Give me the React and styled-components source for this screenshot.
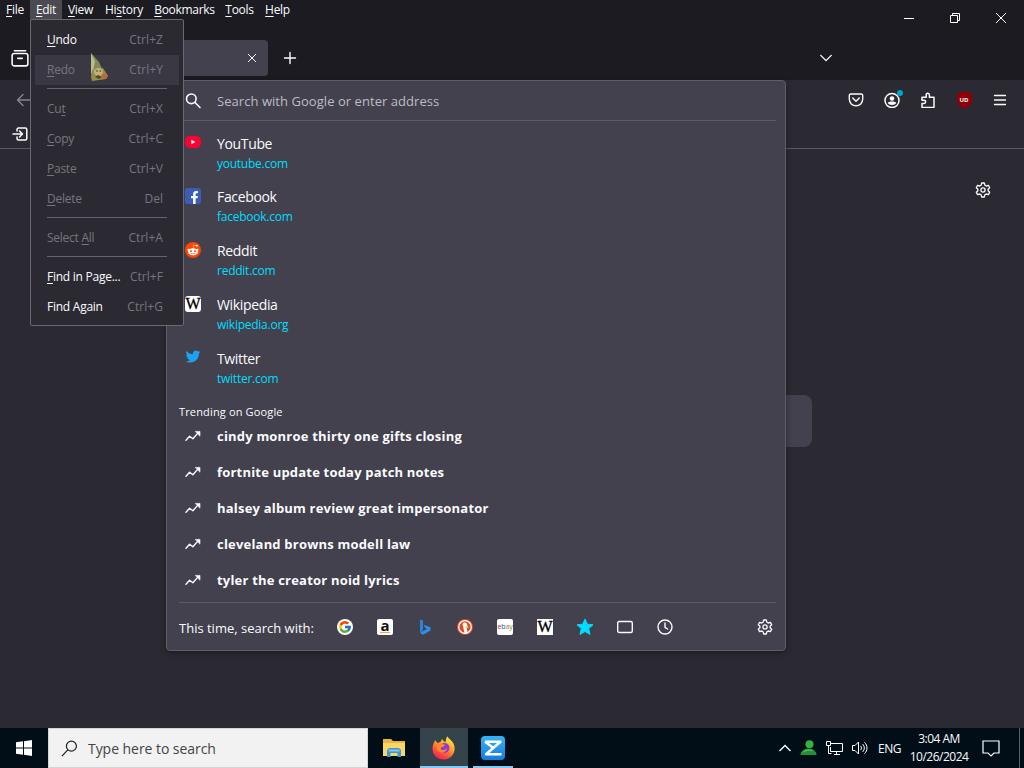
import React from 'react';
import styled, { createGlobalStyle } from 'styled-components';
import { FaTwitter, FaRedditAlien, FaFacebookF } from 'react-icons/fa';
import { FcGoogle } from 'react-icons/fc';

const menus = [
  ['', 'F', 'ile'],
  ['', 'E', 'dit'],
  ['', 'V', 'iew'],
  ['Hi', 's', 'tory'],
  ['', 'B', 'ookmarks'],
  ['', 'T', 'ools'],
  ['', 'H', 'elp'],
];

const editMenu = [
  { label: ['', 'U', 'ndo'], keys: 'Ctrl+Z', on: true },
  { label: ['', 'R', 'edo'], keys: 'Ctrl+Y', hover: true },
  null,
  { label: ['Cu', 't', ''], keys: 'Ctrl+X' },
  { label: ['', 'C', 'opy'], keys: 'Ctrl+C' },
  { label: ['', 'P', 'aste'], keys: 'Ctrl+V' },
  { label: ['', 'D', 'elete'], keys: 'Del' },
  null,
  { label: ['Select ', 'A', 'll'], keys: 'Ctrl+A' },
  null,
  { label: ['', 'F', 'ind in Page...'], keys: 'Ctrl+F', on: true },
  { label: ['Find A', '', 'gain'], keys: 'Ctrl+G', on: true },
];

const trending = [
  'cindy monroe thirty one gifts closing',
  'fortnite update today patch notes',
  'halsey album review great impersonator',
  'cleveland browns modell law',
  'tyler the creator noid lyrics',
];

const Key = ({ parts }) => (
  <span>{parts[0]}{parts[1] && <u>{parts[1]}</u>}{parts[2]}</span>
);

// Icons

const Line = ({ size = 16, w = 1.4, children, ...rest }) => (
  <svg width={size} height={size} viewBox="0 0 16 16" fill="none" stroke="currentColor" strokeWidth={w} strokeLinecap="round" strokeLinejoin="round" {...rest}>{children}</svg>
);

const Gear = () => (
  <Line w={1.3}>
    <path d="M6.700 1h2.600l.6 2.200 1.300.8 2.200-.6 1.300 2.300L13.100 7.200v1.600l1.600 1.500-1.300 2.300-2.200-.6-1.300.8-.6 2.200H6.700l-.6-2.200-1.300-.8-2.200.6-1.300-2.300 1.600-1.500V7.200L1.300 5.700l1.300-2.300 2.200.6 1.300-.8z" />
    <circle cx="8" cy="8" r="2.100" />
  </Line>
);
const Glass = () => <Line w={1.6}><circle cx="6.300" cy="5.800" r="4.800" /><path d="M10 9.500l5 5" /></Line>;
const Trend = () => (
  <Line w={1.4}>
    <path d="M1 12.300l3.600-4.100 3.300 2.500L13.500 4.400" />
    <path d="M10.500 3.400h4.500v4.500z" fill="currentColor" strokeWidth=".6" />
  </Line>
);
const YouTube = () => (
  <svg width="16" height="16" viewBox="0 0 16 16"><rect y="2" width="16" height="12" rx="5" fill="#ff0033" /><path d="M6.400 5.800v4.400l4-2.200z" fill="#fff" /></svg>
);
const Bing = () => (
  <svg width="16" height="16" viewBox="0 0 16 16"><path d="M3 .5l3 1v9.500l-3 3z" fill="#2a83dc" /><path d="M3 14l3 1.700 7.500-4.300V8.200L6.700 5.700l1.500 3.400 1.900.9L6 12z" fill="#2f8fe8" /></svg>
);
const Duck = () => (
  <svg width="16" height="16" viewBox="0 0 16 16">
    <circle cx="8" cy="8" r="8" fill="#de4b28" /><circle cx="8" cy="8" r="6.300" fill="none" stroke="#fff" strokeWidth="1.300" />
    <path d="M5.500 5c1-2.200 4.500-1.800 4.800 1l.2 2.500-.8 1 1 4.300-3 .6z" fill="#fff" /><path d="M8.500 7.500h3v1.400h-3z" fill="#f5bd20" />
  </svg>
);
const Star = () => <svg width="18" height="18" viewBox="0 0 18 18"><path d="M9 1l2.300 5.200 5.700.6-4.300 3.800 1.300 5.800L9 13.500l-5 2.900 1.300-5.800L1 6.800l5.700-.6z" fill="#00ddff" stroke="#00ddff" strokeLinejoin="round" /></svg>;

const Gnome = () => (
  <svg width="22" height="30" viewBox="0 0 22 30">
    <path d="M2 0L10 9l4 9-12 3z" fill="#7e8a5c" /><path d="M2 0l4 8-2 11-2 2z" fill="#b7bd83" />
    <path d="M3 17l11-2 5 8-2 3-14 2-1-4z" fill="#948d4b" />
    <ellipse cx="9.500" cy="19" rx="4.500" ry="4" fill="#c4b178" />
    <path d="M14 20l5 3-2 3-4-1z" fill="#c4633b" />
    <path d="M6 24l3-2 4 2-3 2z" fill="#4f482a" />
    <circle cx="8" cy="18" r=".8" fill="#3c3624" /><circle cx="11.300" cy="18" r=".8" fill="#3c3624" />
  </svg>
);

const Explorer = () => (
  <svg width="22" height="20" viewBox="0 0 22 20">
    <path d="M0 1h8l2 2h12v15H0z" fill="#eab53c" /><path d="M0 5h22v13H0z" fill="#fbd667" />
    <path d="M4 19v-7l2-2h10l2 2v7h-3.500v-4h-7v4z" fill="#3e95d6" /><path d="M5.500 11.500h11v2h-11z" fill="#8bc4ea" />
  </svg>
);
const Firefox = () => (
  <svg width="24" height="24" viewBox="0 0 24 24">
    <defs>
      <linearGradient id="fx" x1=".8" y1="0" x2=".25" y2="1"><stop offset="0" stopColor="#fff044" /><stop offset=".4" stopColor="#ffa62b" /><stop offset=".75" stopColor="#ff4a3d" /><stop offset="1" stopColor="#f5156c" /></linearGradient>
    </defs>
    <path d="M3 4l2.500 3 3-1 1.500-3 2 2.500 1.500.5C14 3.500 14 2 15.500.3c1 2.700 4 3.500 6 7.200C25 15 20 23.500 12 23.500S-.8 17 .8 10C1 7.500 2.500 6.500 3 4z" fill="url(#fx)" />
    <circle cx="12.500" cy="12" r="5" fill="#8b3bdc" />
    <path d="M5 8c3-1.500 5.500 0 8 1-1 2.500-4 1.500-4.500 3.500 1 2.500 5 2 6.500-.5 0 5-8 6.500-10 1z" fill="#ff8a26" />
  </svg>
);
const Zed = () => (
  <svg width="24" height="24" viewBox="0 0 24 24">
    <defs><linearGradient id="zd" x1="0" y1="0" x2="0" y2="1"><stop offset="0" stopColor="#35b4f5" /><stop offset="1" stopColor="#167bdc" /></linearGradient></defs>
    <rect width="24" height="24" rx="4" fill="url(#zd)" />
    <path d="M4 5.800h15.500L5 18.200h15.500M4 5.800l8.500 6.200" fill="none" stroke="#fff" strokeWidth="2.500" strokeLinejoin="round" />
  </svg>
);

const App = () => {
  return (
    <>
      <Global />
      <Desktop>
        <TitleBar>
          <div>
            <MenuBar>
              {menus.map((m, i) => <MenuName key={m[1] + i} $open={i === 1}><Key parts={m} /></MenuName>)}
            </MenuBar>
            <TabStrip>
              <IconSlot $w={40}>
                <Line size={18}><path d="M3 1.500h10" /><rect x="1" y="4" width="14" height="11" rx="2" /><path d="M6 8.300h4" /></Line>
              </IconSlot>
              <Tab><Line size={10} w={1.600}><path d="M2 2l12 12M14 2L2 14" /></Line></Tab>
              <IconSlot $w={44}><Line size={16} w={1.400}><path d="M8 2.500v11M2.500 8h11" /></Line></IconSlot>
              <ListTabs><Line size={14} w={1.600}><path d="M2 5l6 6 6-6" /></Line></ListTabs>
            </TabStrip>
          </div>
          <WindowButtons>
            <svg width="10" height="10" stroke="#fff"><path d="M0 5.500h10" /></svg>
            <svg width="12" height="12" stroke="#fff" fill="none"><path d="M1.500 3.500h7v7h-7zM3.500 3.500v-2h7v7h-2" /></svg>
            <svg width="10" height="10" stroke="#fff"><path d="M0 0l10 10M10 0L0 10" /></svg>
          </WindowButtons>
        </TitleBar>

        <NavBar>
          <BackSlot><Line><path d="M15 8H1.500M7 2.500L1.500 8 7 13.500" /></Line></BackSlot>
          <NavIcons>
            <IconSlot $w={36}><Line><path d="M2.800 2h10.400c.9 0 1.500.6 1.500 1.500V7c0 4-3 6.800-6.700 6.800S1.300 11 1.300 7V3.500C1.300 2.600 1.900 2 2.800 2z" /><path d="M4.700 6L8 9.200 11.300 6" /></Line></IconSlot>
            <IconSlot $w={36}>
              <Line w={1.500}><circle cx="8" cy="8.500" r="7" /><circle cx="8" cy="6.500" r="2.300" fill="currentColor" stroke="none" /><path d="M3.800 11c0-2 8.400-2 8.400 0-1 2.500-7.400 2.500-8.400 0z" fill="currentColor" stroke="none" /></Line>
              <Dot />
            </IconSlot>
            <IconSlot $w={36}><Line w={1.500}><path d="M2 15.500v-4h2c2.200 0 2.200-3.300 0-3.300H2V5.200h4.200V3c0-2.400 3.200-2.400 3.200 0v2.200H14v10.300z" /></Line></IconSlot>
            <IconSlot $w={36}><Shield>UD</Shield></IconSlot>
            <IconSlot $w={36}><Line w={1.300}><path d="M2.500 3.500h11M2.500 8h11M2.500 12.500h11" /></Line></IconSlot>
          </NavIcons>
        </NavBar>
        <BookmarksBar>
          <IconSlot $w={40}><Line w={1.500}><path d="M5 5V3.500C5 2.700 5.700 2 6.500 2h6.800c.8 0 1.500.7 1.500 1.500v9c0 .8-.7 1.500-1.500 1.500H6.500c-.8 0-1.500-.7-1.500-1.500V11M1 8h9M7.500 5L10.500 8l-3 3" /></Line></IconSlot>
        </BookmarksBar>

        <NewTab>
          <Customize><Gear /></Customize>
          <SearchBox />
        </NewTab>

        <Taskbar>
          <Start>
            <svg width="16" height="16" viewBox="0 0 16 16" fill="#fff"><path d="M0 2.300L7 1.300v6.200H0zM8 1.200L16 0v7.500H8zM0 8.500h7v6.300l-7-1zM8 8.500h8V16l-8-1.200z" /></svg>
          </Start>
          <TaskSearch>
            <svg width="17" height="17" viewBox="0 0 18 18" fill="none" stroke="#222" strokeWidth="1.300"><circle cx="11" cy="6.500" r="5.300" /><path d="M7.200 10.500L1 17" /></svg>
            <span>Type here to search</span>
          </TaskSearch>
          <TaskApp $w={52}><Explorer /></TaskApp>
          <TaskApp $w={48} $active><Firefox /></TaskApp>
          <Running><Zed /></Running>
          <Tray>
            <svg width="12" height="8" fill="none" stroke="#fff" strokeWidth="1.300"><path d="M.5 7L6 1.500 11.500 7" /></svg>
            <svg width="17" height="16" viewBox="0 0 16 16"><circle cx="9" cy="4.300" r="4" fill="#39ae43" /><path d="M0 15c0-4 4-6.500 8-6.500s8 2.500 8 6.500z" fill="#1f9331" /><path d="M3 12c2-2 6-2.500 9-1.500" stroke="#6fd070" fill="none" /></svg>
            <svg width="17" height="15" fill="none" stroke="#fff"><path d="M5 2.500h11.500v8H4.500V6M8 13.500h6M10.500 10.500v3M.5.500h4v4h-4zM2.500 4.500v8h3" /></svg>
            <svg width="16" height="14" fill="none" stroke="#fff"><path d="M.5 4.500h2.500L6.500 1v12L3 9.500H.5zM8.500 4.800c1.200 1.300 1.200 3.100 0 4.400M10.500 3c2.400 2.300 2.400 5.700 0 8M12.500 1.300c3.300 3.300 3.300 8.100 0 11.400" /></svg>
            <Lang>ENG</Lang>
            <Clock><span>3:04 AM</span><span>10/26/2024</span></Clock>
            <Notice width="18" height="17" fill="none" stroke="#fff" strokeWidth="1.200"><path d="M1 1h16v12h-5l-3 3-3-3H1z" /></Notice>
          </Tray>
          <ShowDesktop />
        </Taskbar>

        <UrlPanel>
          <UrlInput><IconCol><Glass /></IconCol><span>Search with Google or enter address</span></UrlInput>
          <Sites>
            <Site><YouTube /><div><Name>YouTube</Name><Url>youtube.com</Url></div></Site>
            <Site><Badge $bg="#3b5db5" $shape="2px"><FacebookF size={13} /></Badge><div><Name>Facebook</Name><Url>facebook.com</Url></div></Site>
            <Site><Badge $bg="#ff4500" $shape="50%"><FaRedditAlien size={12} /></Badge><div><Name>Reddit</Name><Url>reddit.com</Url></div></Site>
            <Site><Badge $bg="#fff" $shape="3px"><BigW>W</BigW></Badge><div><Name>Wikipedia</Name><Url>wikipedia.org</Url></div></Site>
            <Site><FaTwitter size={15} color="#1da1f2" /><div><Name>Twitter</Name><Url>twitter.com</Url></div></Site>
          </Sites>
          <TrendTitle>Trending on Google</TrendTitle>
          {trending.map((t) => <TrendRow key={t}><IconCol><Trend /></IconCol><span>{t}</span></TrendRow>)}
          <Engines>
            <EngineLabel>This time, search with:</EngineLabel>
            <Engine><Badge $bg="#fff" $shape="50%"><FcGoogle size={14} /></Badge></Engine>
            <Engine><Badge $bg="#fff" $shape="2px"><Amazon>a</Amazon></Badge></Engine>
            <Engine><Bing /></Engine>
            <Engine><Duck /></Engine>
            <Engine><Badge $bg="#fff" $shape="2px"><Ebay><i>e</i><b>b</b><em>a</em><s>y</s></Ebay></Badge></Engine>
            <Engine><Badge $bg="#fff" $shape="0"><BigW>W</BigW></Badge></Engine>
            <Engine><Star /></Engine>
            <Engine><Line><rect x=".7" y="2.500" width="14.600" height="11" rx="1.500" /></Line></Engine>
            <Engine><Line><circle cx="8" cy="8" r="7" /><path d="M8 4v4.300l2.500 1.700" /></Line></Engine>
            <EngineGear><Gear /></EngineGear>
          </Engines>
        </UrlPanel>

        <EditMenu>
          {editMenu.map((item, i) =>
            item ? (
              <MenuItem key={i} $on={item.on} $hover={item.hover}>
                <Key parts={item.label} />
                <Shortcut>{item.keys}</Shortcut>
              </MenuItem>
            ) : <Separator key={i} />
          )}
        </EditMenu>
        <Pointer><Gnome /></Pointer>
      </Desktop>
    </>
  );
};

const Global = createGlobalStyle`
  * { box-sizing: border-box; }
  body {
    margin: 0;
    background: #2b2a33;
    overflow: hidden;
    font-family: "Open Sans", "Noto Sans", sans-serif;
    color: #fbfbfe;
  }
  svg { display: block; flex: none; }
  u { text-underline-offset: 2px; text-decoration-thickness: 1px; }
`;

const Desktop = styled.div`
  position: relative;
  display: flex;
  flex-direction: column;
  width: 1024px;
  height: 768px;
  overflow: hidden;
  background: #2b2a33;
`;

// Browser window

const TitleBar = styled.div`
  display: flex;
  height: 80px;
  background: #1c1b22;
  > div:first-child { flex: 1; }
`;
const MenuBar = styled.div`
  display: grid;
  grid-template-columns: 30px 32px 37px 50px 71px 39px 37px;
  height: 20px;
`;
const MenuName = styled.div`
  display: flex;
  justify-content: center;
  font-size: 12px;
  line-height: 20px;
  letter-spacing: -0.3px;
  white-space: nowrap;
  background: ${(p) => (p.$open ? '#4b4a50' : 'transparent')};
`;
const TabStrip = styled.div`
  display: flex;
  align-items: center;
  height: 60px;
  padding-top: 16px;
`;
const IconSlot = styled.div`
  position: relative;
  display: flex;
  align-items: center;
  justify-content: center;
  width: ${(p) => p.$w}px;
`;
const Tab = styled.div`
  display: flex;
  align-items: center;
  justify-content: flex-end;
  width: 220px;
  height: 36px;
  margin: 0 0 0 8px;
  padding-right: 11px;
  border-radius: 4px;
  background: #42414d;
`;
const ListTabs = styled.div`
  margin-left: auto;
  margin-right: 53px;
`;
const WindowButtons = styled.div`
  display: grid;
  grid-template-columns: repeat(3, 46px);
  height: 36px;
  justify-items: center;
  align-items: center;
`;
const NavBar = styled.div`
  display: flex;
  align-items: center;
  justify-content: space-between;
  height: 40px;
  padding-right: 6px;
`;
const BackSlot = styled.div`
  padding-left: 16px;
  color: #85848c;
`;
const NavIcons = styled.div`
  display: flex;
`;
const Dot = styled.span`
  position: absolute;
  top: -2px;
  right: 7px;
  width: 6px;
  height: 6px;
  border-radius: 50%;
  background: #00a3d6;
`;
const Shield = styled.span`
  width: 15px;
  height: 16px;
  border-radius: 5px 5px 8px 8px;
  background: #8d0008;
  font-size: 6px;
  font-weight: 700;
  line-height: 16px;
  text-align: center;
`;
const BookmarksBar = styled.div`
  display: flex;
  align-items: center;
  height: 29px;
  border-bottom: 1px solid #5b5a62;
`;
const NewTab = styled.div`
  flex: 1;
  display: flex;
  flex-direction: column;
`;
const Customize = styled.div`
  align-self: flex-end;
  padding: 33px 33px 0 0;
`;
const SearchBox = styled.div`
  align-self: center;
  width: 600px;
  height: 52px;
  margin-top: 197px;
  border-radius: 8px;
  background: #42414d;
`;

// Address bar results

const UrlPanel = styled.div`
  position: absolute;
  left: 166px;
  top: 80px;
  width: 620px;
  height: 571px;
  padding: 0 9px 0 12px;
  border: 1px solid #5e5d69;
  border-radius: 4px;
  background: #42414d;
  box-shadow: 0 2px 6px rgba(0, 0, 0, 0.35);
`;
const UrlInput = styled.div`
  display: flex;
  align-items: center;
  height: 40px;
  border-bottom: 1px solid #5b5a66;
  font-size: 13px;
  letter-spacing: 0.05px;
  color: #bdbcc4;
`;
const IconCol = styled.div`
  width: 32px;
  margin-left: 6px;
  color: #fbfbfe;
`;
const Sites = styled.div`
  display: flex;
  flex-direction: column;
  padding: 12px 0 0 6px;
`;
const Site = styled.div`
  display: flex;
  gap: 16px;
  height: 53.75px;
  > svg, > span { margin-top: 1.4px; width: 16px; }
`;
const FacebookF = styled(FaFacebookF)`
  margin: 3px 0 0 2px;
`;
const Name = styled.div`
  margin-top: -0.4px;
  font-size: 14px;
  line-height: 22px;
  letter-spacing: -0.35px;
`;
const Url = styled.div`
  font-size: 12px;
  line-height: 18px;
  letter-spacing: -0.25px;
  color: #00ddff;
`;
const Badge = styled.span`
  display: flex;
  align-items: center;
  justify-content: center;
  width: 16px;
  height: 16px;
  border-radius: ${(p) => p.$shape};
  background: ${(p) => p.$bg};
`;
const BigW = styled.span`
  padding-top: 1px;
  font: 400 16px/16px "Liberation Serif", serif;
  color: #000;
  -webkit-text-stroke: 0.3px #000;
`;
const TrendTitle = styled.div`
  height: 16px;
  font-size: 11px;
  line-height: 20px;
  letter-spacing: 0.15px;
`;
const TrendRow = styled.div`
  display: flex;
  align-items: center;
  height: 36px;
  font-size: 13px;
  font-weight: 700;
  letter-spacing: 0.2px;
`;
const Engines = styled.div`
  display: flex;
  align-items: center;
  height: 49px;
  margin-top: 4px;
  border-top: 1px solid #5b5a66;
`;
const EngineLabel = styled.div`
  width: 146px;
  padding-top: 2px;
  font-size: 13px;
`;
const Engine = styled.div`
  display: flex;
  justify-content: center;
  width: 40px;
`;
const EngineGear = styled.div`
  margin-left: auto;
  margin-right: 3px;
`;
const Amazon = styled.span`
  display: flex;
  align-items: center;
  height: 13px;
  padding-bottom: 2px;
  border-bottom: 1px solid #f0a73c;
  font: 700 15px/13px "Open Sans", sans-serif;
  color: #111;
`;
const Ebay = styled.span`
  font-size: 7px;
  line-height: 16px;
  letter-spacing: -0.1px;
  i { font-style: normal; color: #b32a35; }
  b { font-weight: 400; color: #1a4f9d; }
  em { font-style: normal; color: #b08010; }
  s { text-decoration: none; color: #5a8a20; }
`;

// Edit menu

const EditMenu = styled.div`
  position: absolute;
  left: 30px;
  top: 19px;
  width: 154px;
  height: 307px;
  padding: 5px 4px;
  border: 1px solid #6a6970;
  border-radius: 2px;
  background: #2b2a33;
`;
const MenuItem = styled.div`
  display: flex;
  justify-content: space-between;
  height: 30px;
  padding: 0 16px 0 12px;
  font-size: 12px;
  line-height: 30px;
  letter-spacing: -0.25px;
  white-space: nowrap;
  color: ${(p) => (p.$on ? '#fbfbfe' : '#77767e')};
  background: ${(p) => (p.$hover ? '#393843' : 'transparent')};
`;
const Shortcut = styled.span`
  letter-spacing: 0.05px;
  color: #77767e;
`;
const Separator = styled.div`
  height: 1px;
  margin: 3px 12px 5px;
  background: #65646c;
`;
const Pointer = styled.div`
  position: absolute;
  left: 89px;
  top: 53px;
`;

// Windows taskbar

const Taskbar = styled.div`
  display: flex;
  height: 40px;
  background: #010e18;
`;
const Start = styled.div`
  display: flex;
  align-items: center;
  justify-content: center;
  width: 48px;
`;
const TaskSearch = styled.div`
  display: flex;
  align-items: center;
  gap: 10px;
  width: 320px;
  padding-left: 12px;
  border: 1px solid #d5d5d5;
  background: #f2f2f2;
  color: #444;
  font-size: 14px;
  letter-spacing: -0.05px;
`;
const TaskApp = styled.div`
  display: flex;
  align-items: center;
  justify-content: center;
  width: ${(p) => p.$w}px;
  background: ${(p) => (p.$active ? '#35434b' : 'transparent')};
  box-shadow: ${(p) => (p.$active ? 'inset 0 -2px #85c8f2' : 'none')};
`;
const Running = styled(TaskApp)`
  width: 40px;
  margin-left: 5px;
  box-shadow: inset 0 -2px #85c8f2;
`;
const Tray = styled.div`
  display: flex;
  align-items: center;
  gap: 9px;
  margin-left: auto;
  margin-right: 19px;
  font-size: 12px;
`;
const Lang = styled.span`
  width: 23px;
  margin-left: 1px;
  letter-spacing: -0.5px;
`;
const Clock = styled.div`
  display: flex;
  flex-direction: column;
  align-items: center;
  width: 58px;
  line-height: 18px;
  letter-spacing: -0.5px;
  white-space: nowrap;
`;
const Notice = styled.svg`
  margin-left: 5px;
`;
const ShowDesktop = styled.div`
  width: 5px;
  border-left: 1px solid #55606a;
`;

export default App;
